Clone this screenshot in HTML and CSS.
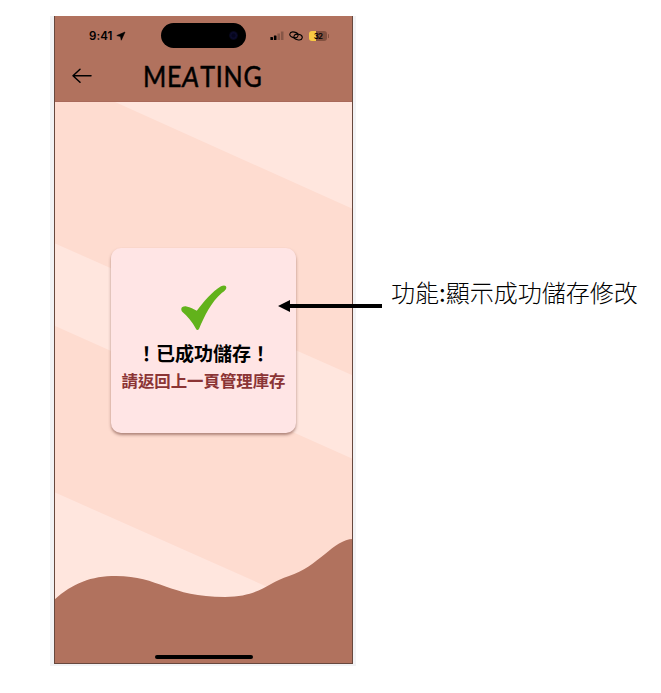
FILE: index.html
```html
<!DOCTYPE html>
<html lang="zh-Hant">
<head>
<meta charset="utf-8">
<title>MEATING</title>
<link rel="stylesheet" href="styles.css">
</head>
<body>
<main class="board">
  <div class="frame">
    <section class="phone">
      <svg class="backdrop" viewBox="54 16 299 648" aria-hidden="true">
        <rect x="54" y="16" width="299" height="648" fill="#fedcd0"/>
        <g fill="#ffe6de">
          <path d="M115 102H353V209Z"/>
          <path d="M54 243L353 375.500V459L54 325.500Z"/>
          <path d="M54 492L290 597L54 640Z"/>
        </g>
        <path fill="#b1725e" d="M54 600C73 583 91 576 116 576C159 576 169 597 225 597C259 597 267 583 289 576C318 567 334 539 353 539V664H54Z"/>
      </svg>
      <header class="top">
        <div class="status">
          <span class="time">9:41</span>
          <svg class="location" viewBox="0 0 10 10"><path d="M9 1L.8 4.600L4.500 5.500L5.300 9.200Z" stroke="#000" stroke-width=".6" stroke-linejoin="round"/></svg>
          <div class="island"><span class="lens"></span></div>
          <svg class="signal" viewBox="0 0 14 10"><rect x=".4" y="6" width="2.600" height="3" rx=".5"/><rect x="3.900" y="4.500" width="2.600" height="4.500" rx=".5"/><path opacity=".24" d="M7.400 2.500H10V9H7.400ZM10.900 .5H13.500V9H10.900Z"/></svg>
          <svg class="link" viewBox="0 0 14 10"><g fill="none" stroke="#000" stroke-width="1.100"><ellipse cx="4.900" cy="3.900" rx="4.200" ry="2.800" transform="rotate(12 5 3.900)"/><ellipse cx="9.100" cy="6" rx="4.200" ry="2.800" transform="rotate(12 9 6)"/></g></svg>
          <span class="battery">32</span><span class="battery-tip"></span>
        </div>
        <div class="bar">
          <svg class="back" viewBox="0 0 20 16"><path d="M8 1.300L1 7.800L8 14.300M1 7.800H19" fill="none" stroke="#000" stroke-width="1.500" stroke-linecap="round" stroke-linejoin="round"/></svg>
          <h1 class="brand">ME<span class="slant">A</span>TING</h1>
        </div>
      </header>
      <article class="card">
        <svg class="check" viewBox="0 0 46 46"><path fill="#62b21b" d="M.3 24.500C0 22 2.500 21 5.500 21.400C9.500 22 12.500 23.800 15.800 25.700C23 16.500 31 6.500 40 1.200C43 -.2 45.500 .2 45.300 2.900C45.200 4.500 43 6.200 41 7.800C30 17.200 23.500 31 18 44Q16.200 46.300 14.800 43.500C11.500 37 6 31 1.500 27Q.4 26 .3 24.500Z"/></svg>
        <p class="message">！已成功儲存！</p>
        <p class="hint">請返回上一頁管理庫存</p>
      </article>
      <span class="home"></span>
    </section>
  </div>
  <p class="note">功能<span class="colon">:</span>顯示成功儲存修改</p>
  <svg class="pointer" viewBox="0 0 104 12"><path d="M0 6L12 0V4H104V8H12V12Z"/></svg>
</main>
</body>
</html>
```
FILE: styles.css
```css
* { box-sizing: border-box; }
body { margin: 0; background: #fff; color: #000; font-family: "Inter", "Noto Sans CJK TC", sans-serif; }
p, h1 { margin: 0; }
svg { display: block; flex: none; }
.board { position: relative; display: flex; align-items: flex-start; width: 661px; height: 693px; padding: 16px 0 0 50px; }
.frame { flex: none; width: 306px; height: 650px; padding: 0 3px 2px 4px; background: #f2f3f5; }
.phone { position: relative; width: 299px; height: 648px; display: flex; flex-direction: column; align-items: center; overflow: hidden; }
.phone::after { content: ""; position: absolute; inset: 0; border: 1px solid #67483e; border-top: 0; }
.backdrop { position: absolute; inset: 0; width: 299px; height: 648px; }
.top { position: relative; width: 100%; height: 86px; background: #b1725e; border-bottom: 1px solid #a9695a; }
.status { display: flex; align-items: center; height: 39px; padding-left: 35px; }
.time { width: 25px; font-size: 11.500px; line-height: 14px; font-weight: 600; letter-spacing: .1px; white-space: nowrap; }
.location { width: 10px; height: 10px; margin-left: 2px; }
.island { display: flex; align-items: center; justify-content: flex-end; width: 85px; height: 25px; margin-left: 35px; padding-right: 8px; border-radius: 13px; background: #000; }
.lens { width: 9px; height: 9px; border-radius: 50%; background: radial-gradient(circle, #05051c 20%, #0c0c2e 45%, #050514 70%); }
.signal { width: 14px; height: 10px; margin-left: 24px; }
.link { width: 14px; height: 10px; margin-left: 5px; }
.battery { width: 18px; height: 10px; margin-left: 6px; border-radius: 3px; background: linear-gradient(90deg, #f8ca43 40%, #82503f 40%); font: 600 8px/10px "Inter", sans-serif; letter-spacing: -.7px; text-align: center; }
.battery-tip { width: 1px; height: 4px; margin-left: 1px; background: #82503f; border-radius: 1px; }
.bar { display: flex; align-items: center; height: 42px; padding-left: 18px; }
.back { width: 20px; height: 16px; }
.brand { margin-left: 51px; font: 400 28px/42px "Lato", sans-serif; letter-spacing: .9px; -webkit-text-stroke: .5px #000; white-space: nowrap; transform: scaleX(.895); transform-origin: 0 50%; }
.slant { display: inline-block; transform: skewX(-7deg); }
.card { position: relative; display: flex; flex-direction: column; align-items: center; width: 185px; height: 185px; margin: 145.500px 0 0; padding-top: 37px; border-radius: 10px; background: #ffe5e5; box-shadow: 0 2px 3px rgba(95, 45, 35, .5); }
.check { width: 46px; height: 46px; }
.message { margin-top: 8px; font: 700 19px/28px "Noto Sans CJK TC", sans-serif; white-space: nowrap; }
.hint { color: #8b3435; font: 700 16.400px/26px "Noto Sans CJK TC", sans-serif; white-space: nowrap; }
.home { position: relative; width: 98px; height: 4px; margin: auto 0 5px; border-radius: 2px; background: #000; }
.note { margin: 258px 0 0 35px; font: 300 24px/36px "Noto Sans CJK TC", sans-serif; white-space: nowrap; }
.colon { font-weight: 400; }
.pointer { position: absolute; left: 278px; top: 300px; width: 104px; height: 12px; }
```
